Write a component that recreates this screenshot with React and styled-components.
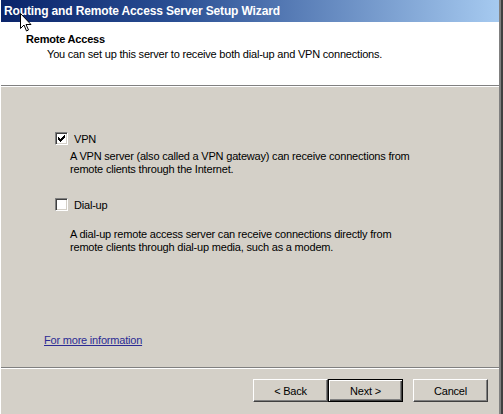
import React, { useState } from 'react';
import styled, { createGlobalStyle } from 'styled-components';

const GlobalStyle = createGlobalStyle`
html, body {
    margin: 0;
    padding: 0;
    background: #d4d0c8;
}
body {
    font-family: "Liberation Sans", Arial, sans-serif;
    font-size: 11px;
    letter-spacing: -0.2px;
    color: #000;
}
`

const Frame = styled.div`
position: relative;
width: 503px;
height: 414px;
box-sizing: border-box;
border-right: 2px solid #404040;
overflow: hidden;
`
const Inner = styled.div`
height: 100%;
display: flex;
flex-direction: column;
box-sizing: border-box;
border-right: 2px solid #808080;
border-left: 1px solid #fff;
`
const TitleBar = styled.div`
height: 22px;
flex: none;
display: flex;
align-items: center;
padding-left: 3px;
background: linear-gradient(to right, #0a246a 0%, #2a4f94 35%, #a6caf0 100%);
color: #fff;
font-weight: 700;
font-size: 12px;
letter-spacing: -0.14px;
white-space: nowrap;
`
const Header = styled.div`
height: 64px;
flex: none;
box-sizing: border-box;
padding: 11px 0 0 25px;
background: #fff;
border-bottom: 1px solid #808080;
box-shadow: 0 1px 0 #fff;
`
const HeaderTitle = styled.div`
font-weight: 700;
line-height: 13px;
`
const HeaderSub = styled.div`
margin: 2px 0 0 21px;
line-height: 13px;
`
const Body = styled.div`
flex: 1;
margin-top: 1px;
padding: 45px 0 0 54px;
box-sizing: border-box;
border-bottom: 1px solid #808080;
box-shadow: 0 1px 0 #fff;
display: flex;
flex-direction: column;
`
const Option = styled.label`
display: flex;
align-items: center;
gap: 6px;
height: 13px;
margin-top: ${p => p.$top}px;
cursor: default;
`
const Box = styled.span`
width: 13px;
height: 13px;
box-sizing: border-box;
background: #fff;
border: 1px solid;
border-color: #808080 #fff #fff #808080;
box-shadow: inset 1px 1px 0 #404040, inset -1px -1px 0 #d4d0c8;
display: flex;
align-items: center;
justify-content: center;
`
const Desc = styled.p`
margin: ${p => p.$top}px 0 0 15px;
line-height: 13px;
white-space: nowrap;
`
const LinkRow = styled.div`
margin: 80px 0 0 -11px;
line-height: 13px;
`
const Link = styled.a`
color: #2b2b94;
text-decoration: underline;
cursor: pointer;
`
const Footer = styled.div`
flex: none;
height: 45px;
margin-top: 1px;
box-sizing: border-box;
padding: 10px 11px 0 0;
display: flex;
justify-content: flex-end;
align-items: flex-start;
`
const Button = styled.button`
width: 75px;
height: 23px;
margin-left: ${p => p.$gap}px;
padding: 0;
box-sizing: border-box;
background: #d4d0c8;
font-family: "Liberation Sans", Arial, sans-serif;
font-size: 11px;
letter-spacing: -0.2px;
color: #000;
border: 1px solid;
border-color: ${p => p.$default ? '#000' : '#fff #404040 #404040 #fff'};
box-shadow: ${p => p.$default
        ? 'inset 1px 1px 0 #fff, inset -1px -1px 0 #404040, inset -2px -2px 0 #808080'
        : 'inset -1px -1px 0 #808080'};
`
const Cursor = styled.svg`
position: absolute;
left: 20px;
top: 13px;
`

function Check({ checked }) {
    return (
        <Box>
            {checked && (
                <svg width="7" height="7" viewBox="0 0 7 7">
                    <path d="M0 2h1v1h1v1h1v-1h1v-1h1v-1h1v-1h1v3h-1v1h-1v1h-1v1h-1v1h-1v-1h-1v-1h-1z" fill="#000" />
                </svg>
            )}
        </Box>
    )
}

export default function App() {
    const [vpn, setVpn] = useState(true);
    const [dial, setDial] = useState(false);

    return (
        <>
            <GlobalStyle />
            <Frame>
                <Inner>
                    <TitleBar>Routing and Remote Access Server Setup Wizard</TitleBar>
                    <Header>
                        <HeaderTitle>Remote Access</HeaderTitle>
                        <HeaderSub>You can set up this server to receive both dial-up and VPN connections.</HeaderSub>
                    </Header>
                    <Body>
                        <Option $top={0} onClick={() => setVpn(!vpn)}>
                            <Check checked={vpn} />
                            <span>VPN</span>
                        </Option>
                        <Desc $top={5}>
                            A VPN server (also called a VPN gateway) can receive connections from<br />
                            remote clients through the Internet.
                        </Desc>
                        <Option $top={22} onClick={() => setDial(!dial)}>
                            <Check checked={dial} />
                            <span>Dial-up</span>
                        </Option>
                        <Desc $top={17}>
                            A dial-up remote access server can receive connections directly from<br />
                            remote clients through dial-up media, such as a modem.
                        </Desc>
                        <LinkRow>
                            <Link>For more information</Link>
                        </LinkRow>
                    </Body>
                    <Footer>
                        <Button $gap={0}>&lt; Back</Button>
                        <Button $gap={0} $default>Next &gt;</Button>
                        <Button $gap={10}>Cancel</Button>
                    </Footer>
                </Inner>
                <Cursor width="12" height="19" viewBox="0 0 12 19">
                    <path d="M0.5 0.5v15l3.5-3.5 2.5 6 2-1-2.5-5.5h5z" fill="#fff" stroke="#000" strokeWidth="1" />
                </Cursor>
            </Frame>
        </>
    )
}
